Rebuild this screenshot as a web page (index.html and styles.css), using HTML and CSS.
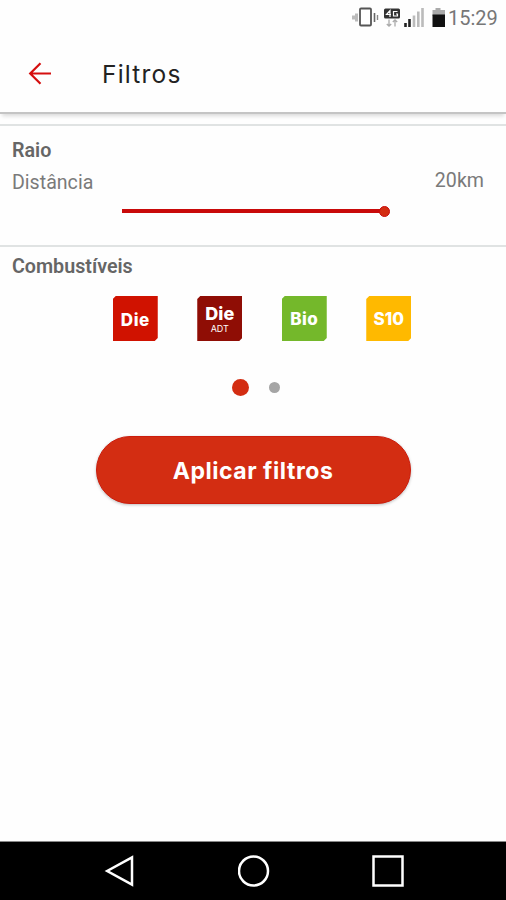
FILE: index.html
```html
<!DOCTYPE html>
<html lang="pt-BR">
<head>
    <meta charset="UTF-8">
    <meta name="viewport" content="width=device-width, initial-scale=1.0">
    <title>Filtros</title>
    <link rel="stylesheet" href="styles.css">
</head>
<body>
    <div class="status-bar">
        <svg class="status-icons" width="96" height="24" viewBox="0 0 96 24">
            <!-- vibrate -->
            <path d="M4.500 7.500v8M1.500 9.500v4" stroke="#bbb" stroke-width="3" fill="none"/>
            <rect x="8" y="2.500" width="11" height="17" rx="1" fill="#fff" stroke="#555" stroke-width="1.800"/>
            <path d="M22.500 7v9" stroke="#666" stroke-width="1.600"/>
            <path d="M25.500 9v5" stroke="#888" stroke-width="1.400"/>
            <!-- 4G -->
            <rect x="32" y="2.500" width="16" height="10" rx="1.500" fill="#333"/>
            <path d="M38 11V4.500l-3.500 4H39M45.500 5.500h-4v4.500h4V8H44" stroke="#fff" stroke-width="1.200" fill="none"/>
            <path d="M37 13.500V20M34.800 18l2.200 2.200 2.200-2.200M43 20.500V14M40.800 16l2.200-2.200 2.200 2.200" stroke="#aaa" stroke-width="1.300" fill="none"/>
            <!-- signal -->
            <path d="M53.500 17v4M57.500 13v8" stroke="#222" stroke-width="2.600"/>
            <path d="M62 9.500V21M66.300 5.500V21M70.500 2v19" stroke="#bbb" stroke-width="2.600"/>
            <!-- battery -->
            <path d="M83.500 2h5v2h4.500v6H80.500V4h3z" fill="#aaa"/>
            <path d="M80.500 8.500h12.500V21H80.500z" fill="#111"/>
        </svg>
        <span class="clock">15:29</span>
    </div>

    <header class="app-bar">
        <svg class="back" width="24" height="24" viewBox="0 0 24 24">
            <path d="M23 11.500H2.500M12.500 1.200L2.200 11.500l10.300 10.300" fill="none" stroke="#d50f0f" stroke-width="2.200"/>
        </svg>
        <h1>Filtros</h1>
    </header>

    <main>
        <section class="radius">
            <h2>Raio</h2>
            <div class="row">
                <span class="label">Distância</span>
                <span class="value">20km</span>
            </div>
            <div class="slider"><span class="knob"></span></div>
        </section>

        <section class="fuels">
            <h2>Combustíveis</h2>
            <div class="fuel-list">
                <div class="fuel diesel"><b>Die</b></div>
                <div class="fuel diesel-adt"><b>Die</b><small>ADT</small></div>
                <div class="fuel bio"><b>Bio</b></div>
                <div class="fuel s10"><b>S10</b></div>
            </div>
            <div class="pager">
                <span class="dot active"></span>
                <span class="dot"></span>
            </div>
            <button class="apply">Aplicar filtros</button>
        </section>
    </main>

    <nav class="nav-bar">
        <svg width="32" height="32" viewBox="0 0 32 32">
            <path d="M28 2.300v27.400L3.200 16z"/>
        </svg>
        <svg width="32" height="32" viewBox="0 0 32 32">
            <circle cx="15.500" cy="16" r="14.500"/>
        </svg>
        <svg width="32" height="32" viewBox="0 0 32 32">
            <path d="M1.500 1.500h29v29h-29z"/>
        </svg>
    </nav>
</body>
</html>
```

FILE: styles.css
```css
* {
    box-sizing: border-box;
}
body {
    display: flex;
    flex-direction: column;
    height: 900px;
    margin: 0;
    background: #fefefe;
    color: #666;
    font-family: Roboto, sans-serif;
}
.status-bar {
    display: flex;
    align-items: center;
    justify-content: flex-end;
    height: 36px;
    padding-right: 9px;
}
.clock {
    width: 49px;
    color: #777;
    font-size: 20px;
    line-height: 36px;
    white-space: nowrap;
}
.app-bar {
    display: flex;
    align-items: center;
    height: 78px;
    padding-left: 28px;
    border-bottom: 2px solid #c4c4c4;
    box-shadow: 0 4px 4px -2px rgba(0, 0, 0, 0.15);
}
.back {
    margin-right: 50px;
}
h1 {
    margin: 0;
    color: #222;
    font: 400 24.500px Inter, sans-serif;
    letter-spacing: 1.200px;
}
main {
    flex: 1;
    padding-top: 10px;
}
section {
    border-top: 2px solid #e0e3e3;
}
h2 {
    margin: 0;
    font-size: 19.700px;
    font-weight: 600;
    line-height: 24px;
}
.radius {
    height: 121px;
    padding: 13px 22px 0 12px;
}
.row {
    display: flex;
    justify-content: space-between;
    height: 32px;
    color: #7a7a7a;
    font-size: 19.600px;
    line-height: 40px;
}
.value {
    line-height: 35px;
}
.slider {
    display: flex;
    align-items: center;
    justify-content: flex-end;
    width: 268px;
    height: 4px;
    margin: 14px 0 0 110px;
    background: linear-gradient(to right, #c90a0a 264px, transparent 264px);
}
.knob {
    width: 11px;
    height: 11px;
    border: 1px solid #c90a0a;
    border-radius: 50%;
    background: #d32d12;
}
.fuels {
    display: flex;
    flex-direction: column;
    align-items: center;
    padding-top: 8px;
}
.fuels h2 {
    align-self: flex-start;
    padding-left: 12px;
}
.fuel-list {
    display: flex;
    gap: 39.500px;
    margin: 17px 0 0 18px;
}
.fuel {
    display: flex;
    flex-direction: column;
    align-items: center;
    justify-content: center;
    width: 45px;
    height: 45px;
    color: #fff;
    font-family: Inter, sans-serif;
    clip-path: polygon(3px 0, 100% 0, 100% 42px, 42px 100%, 0 100%, 0 3px);
}
.fuel b {
    font-size: 17px;
    font-weight: 800;
    line-height: 18px;
}
.fuel small {
    font-size: 9px;
    line-height: 10px;
}
.diesel {
    padding-top: 2px;
    background: #d01200;
}
.diesel b {
    letter-spacing: 0.5px;
}
.diesel-adt {
    background: #8f0d05;
}
.diesel-adt b {
    font-size: 18px;
    line-height: 20px;
}
.bio {
    background: #74b82b;
}
.bio b {
    letter-spacing: 0.4px;
}
.s10 {
    background: #ffb900;
}
.pager {
    display: flex;
    align-items: center;
    gap: 20px;
    height: 17px;
    margin: 38px 0 0 5px;
}
.dot {
    width: 11px;
    height: 11px;
    border-radius: 50%;
    background: #a5a5a5;
}
.dot.active {
    width: 17px;
    height: 17px;
    background: #d32d12;
}
.apply {
    width: 315px;
    height: 68px;
    margin-top: 40px;
    padding-top: 3px;
    border: 1px solid #cc1c0c;
    border-radius: 34px;
    background: #d32d12;
    box-shadow: 0 1px 3px rgba(0, 0, 0, 0.25);
    color: #fff;
    font: 700 23px Inter, sans-serif;
    letter-spacing: 0.550px;
}
.nav-bar {
    display: flex;
    align-items: center;
    justify-content: space-between;
    height: 59px;
    padding: 0 102px 0 104px;
    border-top: 1px solid #888;
    background: #000;
}
.nav-bar svg {
    fill: none;
    stroke: #fff;
    stroke-width: 2.500;
}
```
